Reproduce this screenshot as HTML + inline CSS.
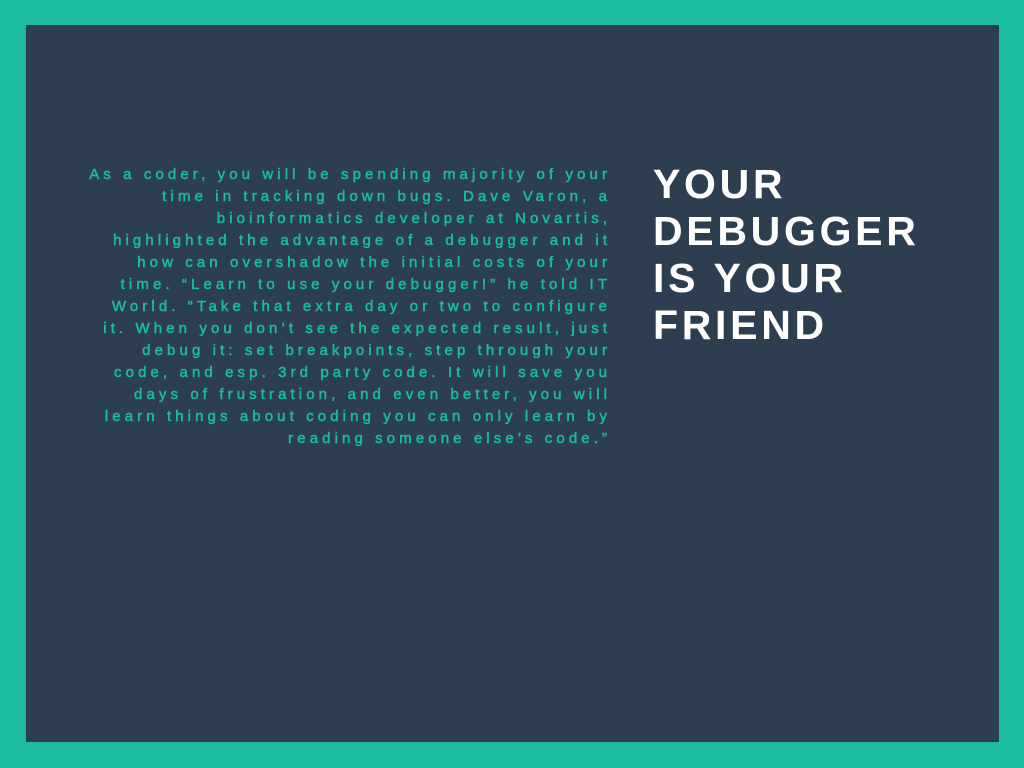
<!DOCTYPE html>
<html><head><meta charset="utf-8"><style>
html,body{margin:0;padding:0}
body{width:1024px;height:768px;background:#1abc9c;position:relative;overflow:hidden}
.in{position:absolute;left:26px;top:25px;width:973px;height:717px;background:#2c3e50}
.body{position:absolute;right:417px;top:164px;text-align:right;color:#1abc9c;font-family:"Liberation Sans",sans-serif;font-size:15px;letter-spacing:4.1px;line-height:22px;white-space:nowrap;-webkit-text-stroke:0.5px #1abc9c}
.body div{margin-right:-4.1px}
.t{position:absolute;left:653px;top:161px;color:#fff;font-family:"Liberation Sans",sans-serif;font-weight:bold;font-size:41px;letter-spacing:3.7px;line-height:47px;white-space:nowrap}
</style></head><body>
<div class="in"></div>
<div class="body">
<div>As a coder, you will be spending majority of your</div>
<div>time in tracking down bugs. Dave Varon, a</div>
<div>bioinformatics developer at Novartis,</div>
<div>highlighted the advantage of a debugger and it</div>
<div>how can overshadow the initial costs of your</div>
<div>time. “Learn to use your debugger!” he told IT</div>
<div>World. “Take that extra day or two to configure</div>
<div>it. When you don’t see the expected result, just</div>
<div>debug it: set breakpoints, step through your</div>
<div>code, and esp. 3rd party code. It will save you</div>
<div>days of frustration, and even better, you will</div>
<div>learn things about coding you can only learn by</div>
<div>reading someone else’s code.”</div>
</div>
<div class="t">YOUR<br>DEBUGGER<br>IS YOUR<br>FRIEND</div>
</body></html>
